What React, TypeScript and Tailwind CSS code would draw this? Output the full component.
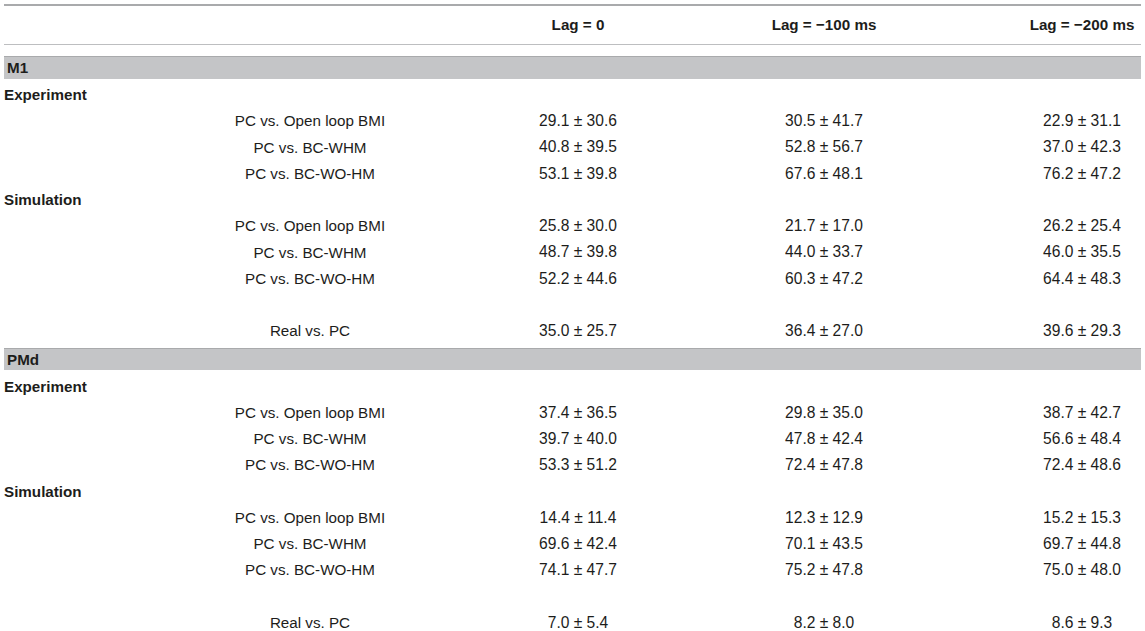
const groups = [
  {
    name: "M1",
    sections: [
      {
        title: "Experiment",
        rows: [
          ["PC vs. Open loop BMI", "29.1 ± 30.6", "30.5 ± 41.7", "22.9 ± 31.1"],
          ["PC vs. BC-WHM", "40.8 ± 39.5", "52.8 ± 56.7", "37.0 ± 42.3"],
          ["PC vs. BC-WO-HM", "53.1 ± 39.8", "67.6 ± 48.1", "76.2 ± 47.2"],
        ],
      },
      {
        title: "Simulation",
        rows: [
          ["PC vs. Open loop BMI", "25.8 ± 30.0", "21.7 ± 17.0", "26.2 ± 25.4"],
          ["PC vs. BC-WHM", "48.7 ± 39.8", "44.0 ± 33.7", "46.0 ± 35.5"],
          ["PC vs. BC-WO-HM", "52.2 ± 44.6", "60.3 ± 47.2", "64.4 ± 48.3"],
        ],
      },
    ],
    real: ["Real vs. PC", "35.0 ± 25.7", "36.4 ± 27.0", "39.6 ± 29.3"],
  },
  {
    name: "PMd",
    sections: [
      {
        title: "Experiment",
        rows: [
          ["PC vs. Open loop BMI", "37.4 ± 36.5", "29.8 ± 35.0", "38.7 ± 42.7"],
          ["PC vs. BC-WHM", "39.7 ± 40.0", "47.8 ± 42.4", "56.6 ± 48.4"],
          ["PC vs. BC-WO-HM", "53.3 ± 51.2", "72.4 ± 47.8", "72.4 ± 48.6"],
        ],
      },
      {
        title: "Simulation",
        rows: [
          ["PC vs. Open loop BMI", "14.4 ± 11.4", "12.3 ± 12.9", "15.2 ± 15.3"],
          ["PC vs. BC-WHM", "69.6 ± 42.4", "70.1 ± 43.5", "69.7 ± 44.8"],
          ["PC vs. BC-WO-HM", "74.1 ± 47.7", "75.2 ± 47.8", "75.0 ± 48.0"],
        ],
      },
    ],
    real: ["Real vs. PC", "7.0 ± 5.4", "8.2 ± 8.0", "8.6 ± 9.3"],
  },
];

const Row = ({ cells }: { cells: string[] }) => {
  return (
    <div className="grid grid-cols-[412px_324px_168px_1fr] h-[26.25px] items-center">
      <p className="pl-[200px] text-center">{cells[0]}</p>
      <p className="text-center text-[15.6px]">{cells[1]}</p>
      <p className="text-center text-[15.6px]">{cells[2]}</p>
      <p className="pl-[115px] text-center text-[15.6px]">{cells[3]}</p>
    </div>
  );
};

const App = () => {
  return (
    <div
      className="w-[1145px] h-[631px] overflow-hidden bg-white px-[4px] pt-[4px] text-[15.2px] leading-none text-[#1d1d1b]"
      style={{ fontFamily: '"Liberation Sans", Arial, sans-serif' }}
    >
      <div className="grid grid-cols-[412px_324px_168px_1fr] h-[41px] items-center border-t-2 border-b border-t-[#a9aaac] border-b-[#bdbec0] font-bold">
        <p></p>
        <p className="text-center">Lag = 0</p>
        <p className="text-center">Lag = −100 ms</p>
        <p className="pl-[115px] text-center">Lag = −200 ms</p>
      </div>
      {groups.map((g, gi) => (
        <div key={g.name} className={gi === 0 ? "mt-[11px]" : "mt-[3.5px]"}>
          <div className="h-[22.5px] flex items-center bg-[#c4c5c7] border-t border-[#a9aaac] px-[3px] font-bold">
            {g.name}
          </div>
          <div className="pt-[3px]">
            {g.sections.map((s) => (
              <div key={s.title}>
                <div className="h-[26.25px] flex items-center font-bold">
                  {s.title}
                </div>
                {s.rows.map((r) => (
                  <Row key={r[0]} cells={r} />
                ))}
              </div>
            ))}
            <div className="h-[26.25px]"></div>
            <Row cells={g.real} />
          </div>
        </div>
      ))}
    </div>
  );
};

export default App;
